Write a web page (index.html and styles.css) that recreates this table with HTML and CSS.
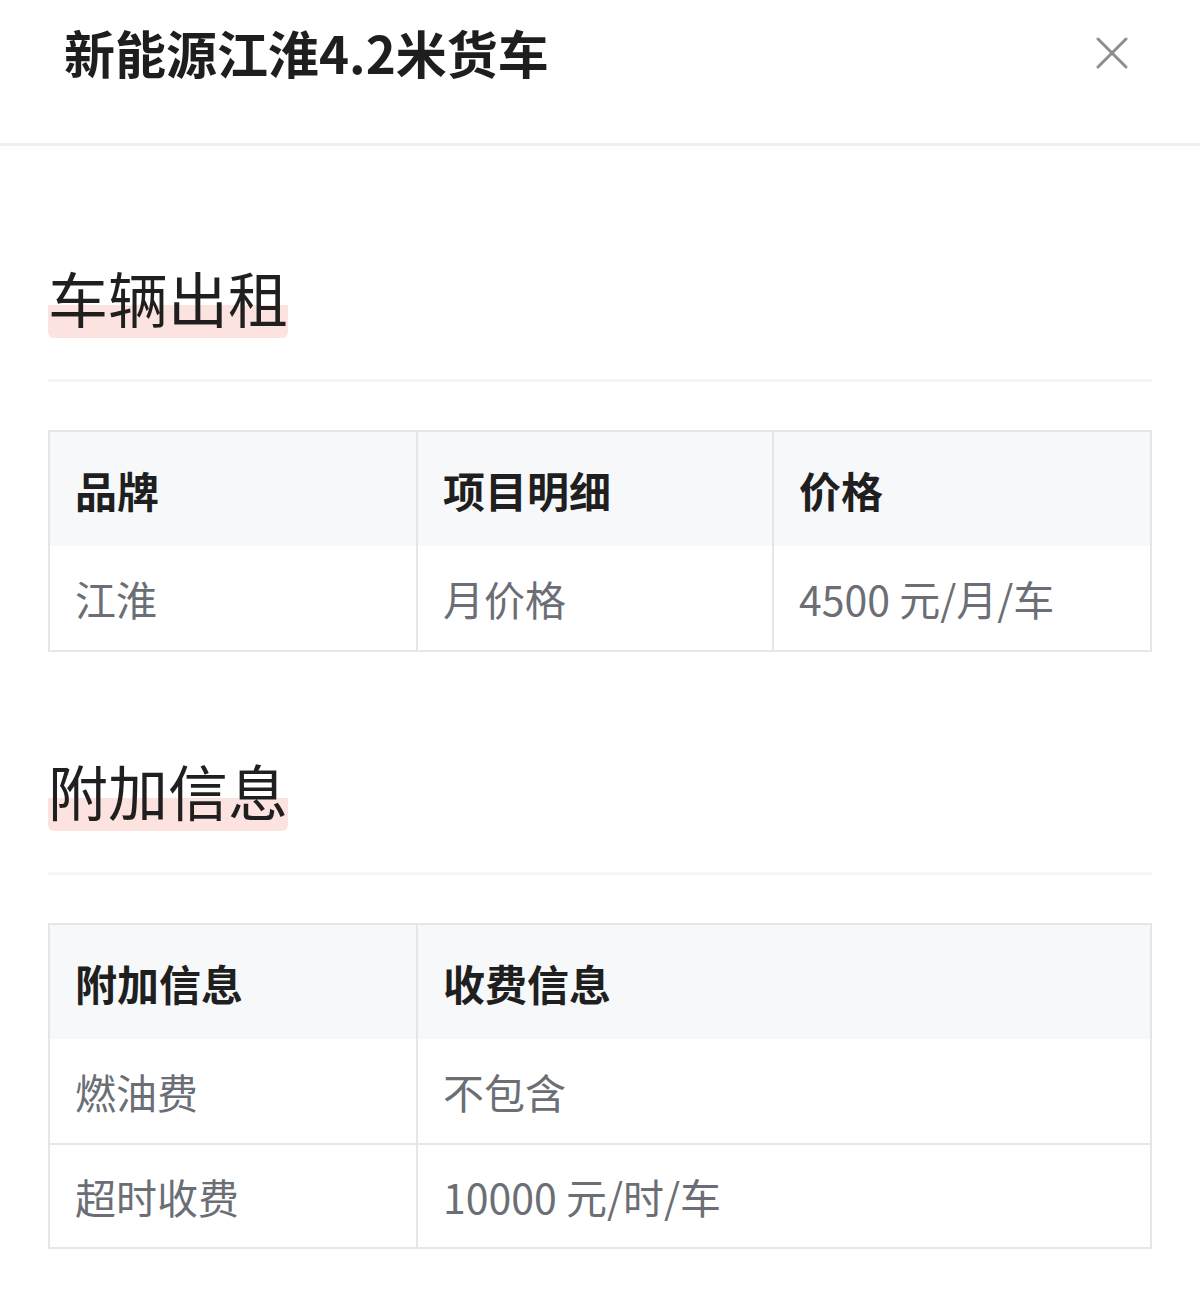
FILE: index.html
```html
<!DOCTYPE html>
<html lang="zh-CN">
<head>
<meta charset="utf-8">
<title>新能源江淮4.2米货车</title>
<link rel="stylesheet" href="styles.css">
</head>
<body>
<header class="header">
  <h1 class="title">新能源江淮4.2米货车</h1>
  <button class="close" aria-label="关闭">
    <svg viewBox="0 0 32 32" width="32" height="32"><path d="M2 2 L30 30 M30 2 L2 30" stroke="#8e8e8e" stroke-width="3" stroke-linecap="round" fill="none"/></svg>
  </button>
</header>
<main class="content">
  <section class="section first">
    <h2 class="sec-title">车辆出租</h2>
    <div class="divider"></div>
    <div class="table cols3">
      <div class="cell th">品牌</div>
      <div class="cell th">项目明细</div>
      <div class="cell th">价格</div>
      <div class="cell td">江淮</div>
      <div class="cell td">月价格</div>
      <div class="cell td">4500 元/月/车</div>
    </div>
  </section>
  <section class="section second">
    <h2 class="sec-title">附加信息</h2>
    <div class="divider"></div>
    <div class="table cols2">
      <div class="cell th">附加信息</div>
      <div class="cell th">收费信息</div>
      <div class="cell td">燃油费</div>
      <div class="cell td">不包含</div>
      <div class="cell td row-line">超时收费</div>
      <div class="cell td row-line">10000 元/时/车</div>
    </div>
  </section>
</main>
</body>
</html>
```
FILE: styles.css
```css
* { box-sizing: border-box; }
html, body { margin: 0; padding: 0; background: #ffffff; }
body {
  font-family: "Noto Sans CJK SC", "Noto Sans", sans-serif;
  color: #222222;
}
.header {
  height: 146px;
  border-bottom: 3px solid #efefef;
  display: flex;
  justify-content: space-between;
  align-items: flex-start;
  padding: 16px 72px 0 64px;
}
.title {
  margin: 0;
  font-size: 51px;
  line-height: 72px;
  font-weight: 700;
  color: #1e1e1e;
}
.close {
  border: 0;
  background: none;
  padding: 0;
  margin-top: 21px;
  width: 32px;
  height: 32px;
  display: block;
}
.close svg { display: block; }
.content { padding: 0 48px; }
.section { display: flex; flex-direction: column; align-items: flex-start; }
.section.first { margin-top: 115px; }
.section.second { margin-top: 102px; }
.sec-title {
  margin: 0;
  font-size: 60px;
  line-height: 72px;
  padding-bottom: 5px;
  font-weight: 400;
  color: #1f1f1f;
  background: linear-gradient(#fde3df, #fde3df) no-repeat left bottom / 100% 33px;
  border-radius: 6px;
}
.divider {
  align-self: stretch;
  height: 3px;
  background: #f5f5f5;
  margin-top: 41px;
}
.table {
  align-self: stretch;
  margin-top: 48px;
  display: grid;
  border: 2px solid #e6e6e6;
  grid-template-rows: 114px;
  grid-auto-rows: 104px;
}
.cols3 { grid-template-columns: 366px 356px 1fr; }
.cols2 { grid-template-columns: 366px 1fr; }
.cell {
  display: flex;
  align-items: center;
  padding-left: 25px;
  border-left: 2px solid #e6e6e6;
  font-size: 41px;
}
.cols3 .cell:nth-child(3n+1),
.cols2 .cell:nth-child(2n+1) { border-left: 0; }
.th {
  background: #f7f8fa;
  font-weight: 700;
  color: #1f1f1f;
  font-size: 42px;
}
.td {
  color: #6b6f75;
  font-weight: 400;
}
.row-line { border-top: 2px solid #e6e6e6; }
```
